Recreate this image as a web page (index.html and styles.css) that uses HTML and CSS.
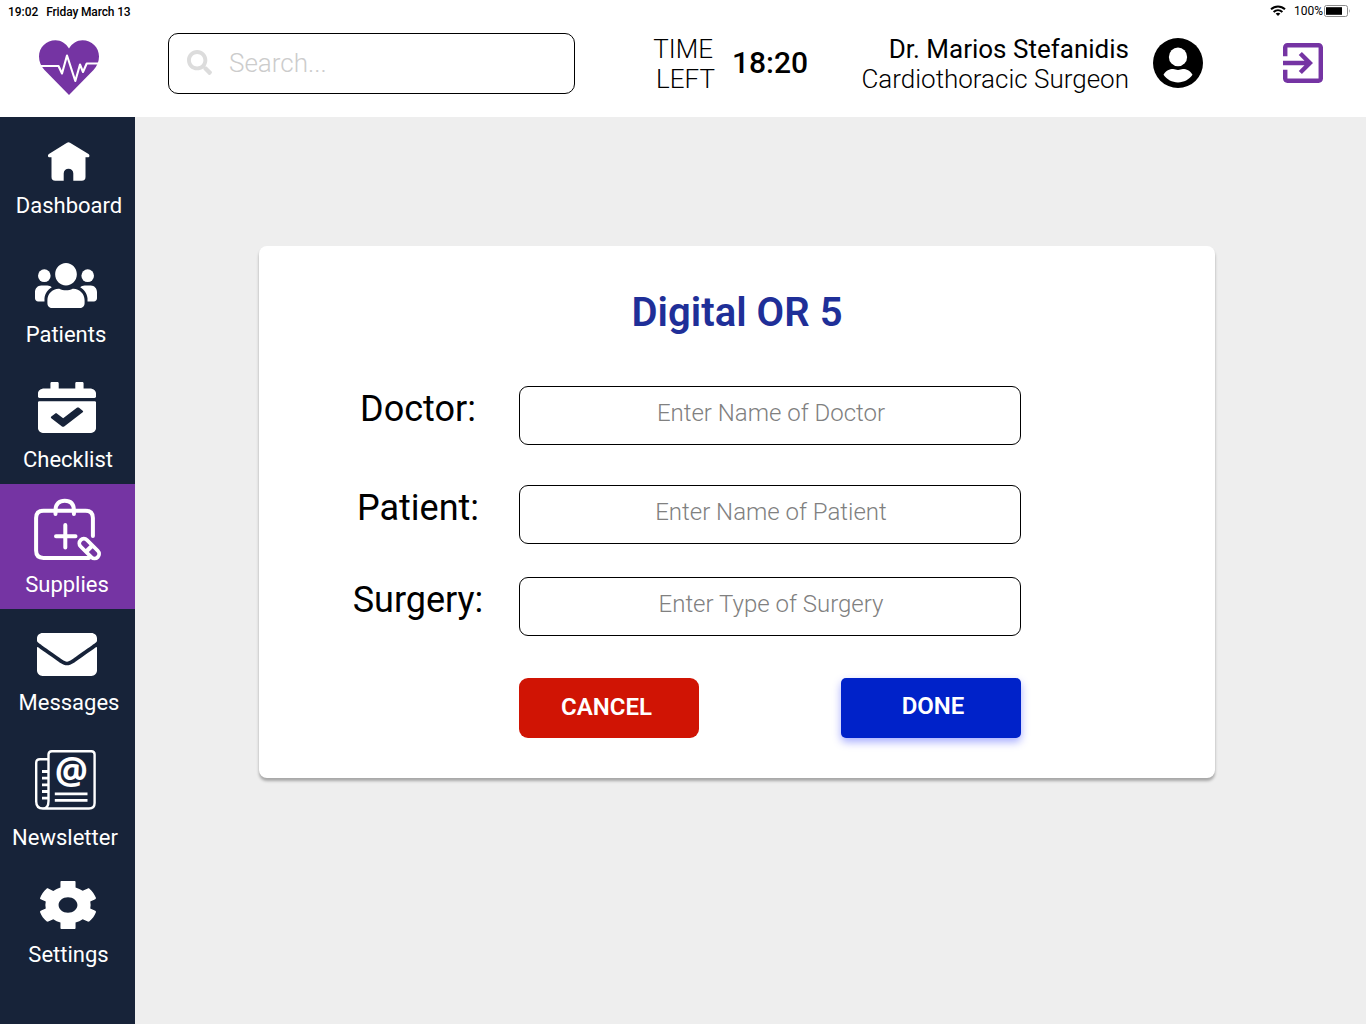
FILE: index.html
```html
<!DOCTYPE html>
<html lang="en">
<head>
<meta charset="utf-8">
<title>Digital OR 5</title>
<link rel="stylesheet" href="styles.css">
</head>
<body>
<header class="header">
  <div class="status">
    <span class="status-time">19:02</span>
    <span class="status-date">Friday March 13</span>
    <svg class="wifi" width="16" height="11" viewBox="0 0 16 11"><g fill="none" stroke="#000" stroke-width="2"><path d="M1 4.300C5 .4 11 .4 15 4.300"/><path d="M3.600 7C6.200 4.500 9.800 4.500 12.400 7"/></g><path d="M5.600 8.600Q8 6.800 10.400 8.600L8 11z"/></svg>
    <span class="status-charge">100%</span>
    <svg class="battery" width="27" height="12" viewBox="0 0 27 12"><rect x=".5" y=".5" width="23" height="11" rx="2" fill="#fff" stroke="#8c8c8c"/><rect x="2" y="2.200" width="16" height="7.600"/><path d="M25 4q1.500 2 0 4z" fill="#8c8c8c"/></svg>
  </div>
  <div class="topbar">
    <svg class="logo" width="60" height="55" viewBox="0 0 60 55"><path fill="#7534a3" d="M30 8.500C27 3.500 22 .3 16.500 .3 7.400 .3 0 7.500 0 16.500 0 22 2 26 5.500 30L30 55 54.500 30C58 26 60 22 60 16.500 60 7.500 52.600 .3 43.500 .3 38 .3 33 3.500 30 8.500z"/><path fill="none" stroke="#fff" stroke-width="2.100" stroke-linejoin="round" d="M1.500 26H19.500L23 33.500 28 15.500 36.300 41 41 24.500 44 32 47.700 23.500H59"/></svg>
    <label class="search">
      <svg width="25" height="25" viewBox="0 0 512 512"><path fill="#dcdcdc" d="M505 442.700L405.300 343c-4.500-4.500-10.600-7-17-7H372c27.600-35.300 44-79.700 44-128C416 93.100 322.900 0 208 0S0 93.100 0 208s93.100 208 208 208c48.300 0 92.700-16.400 128-44v16.300c0 6.400 2.500 12.500 7 17l99.700 99.700c9.400 9.400 24.600 9.400 33.900 0l28.300-28.300c9.400-9.400 9.400-24.600.1-34zM208 336c-70.700 0-128-57.200-128-128 0-70.700 57.200-128 128-128 70.700 0 128 57.200 128 128 0 70.700-57.200 128-128 128z"/></svg>
      <input class="search-input" type="text" placeholder="Search...">
    </label>
    <div class="time-label"><span class="time-word">TIME</span><span>LEFT</span></div>
    <div class="time-value">18:20</div>
    <div class="user"><span class="user-name">Dr. Marios Stefanidis</span><span class="user-role">Cardiothoracic Surgeon</span></div>
    <svg class="avatar" width="50" height="50" viewBox="0 0 50 50"><circle cx="25" cy="25" r="25"/><ellipse cx="25" cy="18.900" rx="9.100" ry="9.400" fill="#fff"/><path fill="#fff" d="M10.500 36.800C13 32.500 16.500 31 20 31c2 0 3 .9 5 .9S28 31 30 31c3.500 0 7 1.500 9.500 5.800C36 41.800 31 44.400 25 44.400S14 41.800 10.500 36.800z"/></svg>
    <svg class="exit" width="40" height="40" viewBox="3 3 18 18"><path fill="#7534a3" d="M10.090 15.590L11.500 17l5-5-5-5-1.410 1.410L12.670 11H3v2h9.670l-2.580 2.590zM19 3H5c-1.110 0-2 .9-2 2v4h2V5h14v14H5v-4H3v4c0 1.100.89 2 2 2h14c1.100 0 2-.9 2-2V5c0-1.100-.9-2-2-2z"/></svg>
  </div>
</header>
<div class="body">
  <nav class="sidebar">
    <a class="item dashboard">
      <svg width="42" height="39" viewBox="0 0 42 39"><path fill="#fff" d="M19 .8q1.500-1 3 0L40.500 12q.9.600.9 1.500V14q0 1.200-1.200 1.200H37.500V35q0 3.800-3.800 3.800H25.300V31.500a4.800 4.800 0 0 0-9.600 0V38.800H7.300Q3.500 38.800 3.500 35V15.200H1.200Q0 15.200 0 14V13.500Q0 12.600.9 12z"/></svg>
      <span>Dashboard</span>
    </a>
    <a class="item patients">
      <svg width="62" height="45" viewBox="0 32 640 448" preserveAspectRatio="none"><g fill="#fff"><ellipse cx="96" cy="158" rx="65" ry="63"/><ellipse cx="544" cy="158" rx="65" ry="63"/><path d="M576 256h-64c-17.600 0-33.500 7.100-45.100 18.600 40.300 22.100 68.900 62 75.100 109.400-0 25 0 32 0 32h66c17.700 0 32-14.300 32-32v-64c0-35.300-28.700-64-64-64zM173.100 274.600C161.500 263.100 145.600 256 128 256H64c-35.300 0-64 28.700-64 64v64c0 17.700 14.300 32 32 32h65.900v-32c6.300-47.400 34.900-87.300 75.200-109.400z"/><path d="M320 256c61.900 0 112-50.100 112-112S381.900 32 320 32 208 82.100 208 144s50.100 112 112 112zM396.800 288h-8.300c-20.800 10-43.900 16-68.500 16s-47.600-6-68.500-16h-8.300C179.600 288 128 339.600 128 403.200V432c0 26.500 21.500 48 48 48h288c26.500 0 48-21.500 48-48v-28.800c0-63.600-51.600-115.200-115.200-115.200z"/></g></svg>
      <span>Patients</span>
    </a>
    <a class="item checklist">
      <svg width="58" height="51" viewBox="0 0 448 512" preserveAspectRatio="none"><path fill="#fff" d="M436 160H12c-6.627 0-12-5.373-12-12v-36c0-26.510 21.490-48 48-48h48V12c0-6.627 5.373-12 12-12h40c6.627 0 12 5.373 12 12v52h128V12c0-6.627 5.373-12 12-12h40c6.627 0 12 5.373 12 12v52h48c26.510 0 48 21.490 48 48v36c0 6.627-5.373 12-12 12zM12 192h424c6.627 0 12 5.373 12 12v260c0 26.510-21.490 48-48 48H48c-26.510 0-48-21.490-48-48V204c0-6.627 5.373-12 12-12zm333.296 95.947l-28.169-28.398c-4.667-4.705-12.265-4.736-16.970-.068L194.120 364.665l-45.980-46.352c-4.667-4.705-12.266-4.736-16.971-.068l-28.397 28.170c-4.705 4.667-4.736 12.265-.068 16.970l82.601 83.269c4.667 4.705 12.265 4.736 16.970.068l142.953-141.805c4.705-4.667 4.736-12.265.068-16.970z"/></svg>
      <span>Checklist</span>
    </a>
    <a class="item supplies">
      <svg width="67" height="62" viewBox="0 0 67 62"><g fill="none" stroke="#fff" stroke-width="4" stroke-linecap="round"><path d="M58.900 37V19Q58.900 11.700 51.500 11.700H9.500Q2.100 11.700 2.100 19V51.500Q2.100 58.900 9.500 58.900H55"/><path d="M21.500 15V11.500C21.500 4.500 25.500 1.800 30.700 1.800S39.900 4.500 39.900 11.500V15"/><path d="M31.300 26V48.500M22 37.200H41.500"/></g><g transform="translate(55.200 49.600) rotate(45)"><rect x="-14" y="-6.400" width="28" height="12.800" rx="6.400" fill="#fff"/><path fill="#7534a3" d="M-2.200-2.700H-7.500a2.700 2.700 0 0 0 0 5.400H-2.200zM2.200-2.700H7.500a2.700 2.700 0 0 1 0 5.400H2.200z"/></g></svg>
      <span>Supplies</span>
    </a>
    <a class="item messages">
      <svg width="60" height="43" viewBox="0 64 512 384" preserveAspectRatio="none"><path fill="#fff" d="M502.300 190.800c3.900-3.100 9.700-.2 9.700 4.700V400c0 26.500-21.500 48-48 48H48c-26.500 0-48-21.500-48-48V195.600c0-5 5.700-7.800 9.700-4.700 22.400 17.400 52.100 39.500 154.100 113.600 21.100 15.400 56.700 47.800 92.200 47.600 35.700.3 72-32.800 92.300-47.600 102-74.100 131.600-96.300 154-113.700zM256 320c23.200.4 56.600-29.200 73.400-41.400 132.700-96.300 142.800-104.700 173.400-128.700 5.800-4.500 9.200-11.500 9.200-18.900v-19c0-26.500-21.500-48-48-48H48c-26.500 0-48 21.500-48 48v19c0 7.400 3.400 14.300 9.200 18.900 30.600 23.900 40.700 32.400 173.400 128.700 16.800 12.200 50.200 41.800 73.400 41.400z"/></svg>
      <span>Messages</span>
    </a>
    <a class="item newsletter">
      <svg width="61" height="60" viewBox="0 0 61 60"><g fill="none" stroke="#fff" stroke-width="2.400"><path d="M13.500 9.300H5Q1.200 9.300 1.200 13V51.500Q1.200 58.500 8 58.500H54Q59.600 58.500 59.600 53V4.500Q59.600 1.200 56.300 1.200H16.800Q13.500 1.200 13.500 4.500V51Q13.500 58.500 8 58.500"/><path stroke-width="2.800" d="M7 21.500H13.500M7 28.200H13.500M7 34.800H13.500M7 41.500H13.500M7 48.200H13.500M19.800 43.800H52.500M19.800 50.300H52.500"/></g><text class="at" x="36.300" y="33.500" text-anchor="middle">@</text></svg>
      <span>Newsletter</span>
    </a>
    <a class="item settings">
      <svg width="56" height="48" viewBox="18.500 8 475 496" preserveAspectRatio="none"><path fill="#fff" d="M487.400 315.700l-42.600-24.600c4.300-23.200 4.300-47 0-70.200l42.600-24.600c4.900-2.800 7.100-8.600 5.500-14-11.100-35.600-30-67.800-54.700-94.600-3.800-4.100-10-5.100-14.800-2.300L380.800 110c-17.900-15.400-38.500-27.300-60.800-35.100V16q0-8-8-8H200q-8 0-8 8V75c-22.200 7.900-42.800 19.800-60.800 35.100L88.700 85.500c-4.900-2.800-11-1.900-14.800 2.300-24.700 26.700-43.600 58.900-54.700 94.600-1.700 5.400.6 11.200 5.500 14L67.300 221c-4.300 23.200-4.300 47 0 70.200l-42.600 24.600c-4.900 2.800-7.100 8.600-5.500 14 11.100 35.600 30 67.800 54.700 94.600 3.800 4.100 10 5.100 14.800 2.300l42.600-24.600c17.900 15.400 38.500 27.300 60.800 35.100V496q0 8 8 8H312q8 0 8-8V437.200c22.200-7.900 42.800-19.800 60.800-35.100l42.600 24.600c4.900 2.800 11 1.900 14.800-2.300 24.700-26.700 43.600-58.900 54.700-94.600 1.500-5.500-.7-11.300-5.600-14.100zM256 336c-44.100 0-80-35.900-80-80s35.900-80 80-80 80 35.900 80 80-35.900 80-80 80z"/></svg>
      <span>Settings</span>
    </a>
  </nav>
  <main class="main">
    <form class="card">
      <h1 class="title">Digital OR 5</h1>
      <div class="row doctor"><label for="doctor">Doctor:</label><input id="doctor" type="text" placeholder="Enter Name of Doctor"></div>
      <div class="row patient"><label for="patient">Patient:</label><input id="patient" type="text" placeholder="Enter Name of Patient"></div>
      <div class="row surgery"><label for="surgery">Surgery:</label><input id="surgery" type="text" placeholder="Enter Type of Surgery"></div>
      <div class="actions"><button class="btn cancel" type="button">CANCEL</button><button class="btn done" type="button">DONE</button></div>
    </form>
  </main>
</div>
</body>
</html>
```
FILE: styles.css
```css
* { box-sizing: border-box; }
body {
  margin: 0;
  width: 1366px;
  height: 1024px;
  display: flex;
  flex-direction: column;
  overflow: hidden;
  background: #fff;
  color: #000;
  font-family: Roboto, "Liberation Sans", sans-serif;
}
svg { display: block; flex: none; overflow: visible; }
input, button { font-family: inherit; }

.header { flex: none; height: 117px; }
.status {
  display: flex;
  align-items: center;
  height: 23px;
  padding: 0 15px 0 8px;
  font-size: 12px;
  font-weight: 500;
}
.status-date { margin: 1px auto 0 8px; letter-spacing: -.14px; }
.status-time { margin-top: 1px; letter-spacing: -.05px; }
.status-charge { margin: -1px 1px 0 8px; font-weight: 400; }
.wifi, .battery { margin-bottom: 2px; }

.topbar { display: flex; align-items: center; height: 81px; padding: 0 43px 0 39px; }
.logo { margin-top: 8px; }
.search {
  display: flex;
  align-items: center;
  gap: 17px;
  width: 407px;
  height: 61px;
  margin-left: 69px;
  padding: 0 0 2px 18px;
  border: 1px solid #000;
  border-radius: 10px;
}
.search-input {
  width: 300px;
  padding: 0;
  border: 0;
  outline: 0;
  background: none;
  font-size: 26px;
  font-weight: 300;
}
.search-input::placeholder { color: #ccc; }
.time-label, .user {
  display: flex;
  flex-direction: column;
  align-items: flex-end;
  font-size: 26px;
  line-height: 30px;
  font-weight: 300;
  white-space: nowrap;
}
.time-label { width: 140px; }
.time-word { padding-right: 2px; }
.time-value { width: 112px; padding: 0 0 2px 17px; font-size: 30px; font-weight: 500; }
.user { width: 302px; }
.user-name { font-weight: 400; }
.avatar { margin: 0 0 2px 24px; }
.exit { margin: 0 0 2px auto; }

.body { flex: 1; display: flex; min-height: 0; }
.sidebar { flex: none; width: 135px; background: #172339; }
.item {
  display: flex;
  flex-direction: column;
  align-items: center;
  justify-content: space-between;
  padding-bottom: 11px;
  color: #fff;
  font-size: 22px;
  line-height: 26px;
}
.dashboard { height: 113px; padding-top: 25px; padding-left: 3px; }
.patients { height: 129px; padding-top: 33px; padding-right: 3px; }
.checklist { height: 125px; padding-top: 22px; padding-right: 1px; }
.checklist svg { margin-top: 1px; }
.checklist span { padding-left: 2px; }
.supplies { height: 125px; padding-top: 15px; background: #7534a3; }
.supplies span { padding-right: 1px; }
.messages { height: 118px; padding-top: 24px; padding-right: 1px; }
.messages span { padding-left: 4px; }
.newsletter { height: 135px; padding-top: 23px; padding-right: 4px; }
.newsletter span { padding-right: 1px; }
.settings { height: 117px; padding-top: 19px; }
.settings span { padding-left: 2px; }
.at { font-family: "Open Sans", sans-serif; font-size: 37px; font-weight: 700; fill: #fff; }

.main { flex: 1; padding: 129px 0 0 124px; background: #eee; }
.card {
  width: 956px;
  height: 532px;
  padding: 43px 194px 0 58px;
  background: #fff;
  border-radius: 8px;
  box-shadow: 0 3px 3px rgba(0, 0, 0, .3);
}
.title {
  margin: 0 -136px 0 0;
  text-align: center;
  font-size: 40px;
  line-height: 48px;
  font-weight: 600;
  letter-spacing: .05px;
  color: #1f2f98;
}
.row { display: grid; grid-template-columns: 202px 502px; }
.row label { text-align: center; font-size: 36px; line-height: 46px; }
.row input {
  height: 59px;
  padding: 0 0 5px 2px;
  border: 1px solid #000;
  border-radius: 9px;
  outline: 0;
  background: #fff;
  text-align: center;
  font-size: 24px;
  font-weight: 300;
}
.row input::placeholder { color: #808080; }
.doctor { margin-top: 49px; }
.patient { margin-top: 40px; }
.surgery { margin-top: 33px; }
.actions { display: flex; justify-content: space-between; margin: 42px 0 0 202px; }
.btn {
  width: 180px;
  height: 60px;
  padding: 0 5px 3px 0;
  border: 0;
  color: #fff;
  font-size: 24px;
  font-weight: 600;
}
.cancel { background: #d01404; border-radius: 9px; }
.done { padding: 0 0 4px 4px; background: #0022c9; border-radius: 5px; box-shadow: 0 4px 9px rgba(0, 20, 255, .35); }
```
